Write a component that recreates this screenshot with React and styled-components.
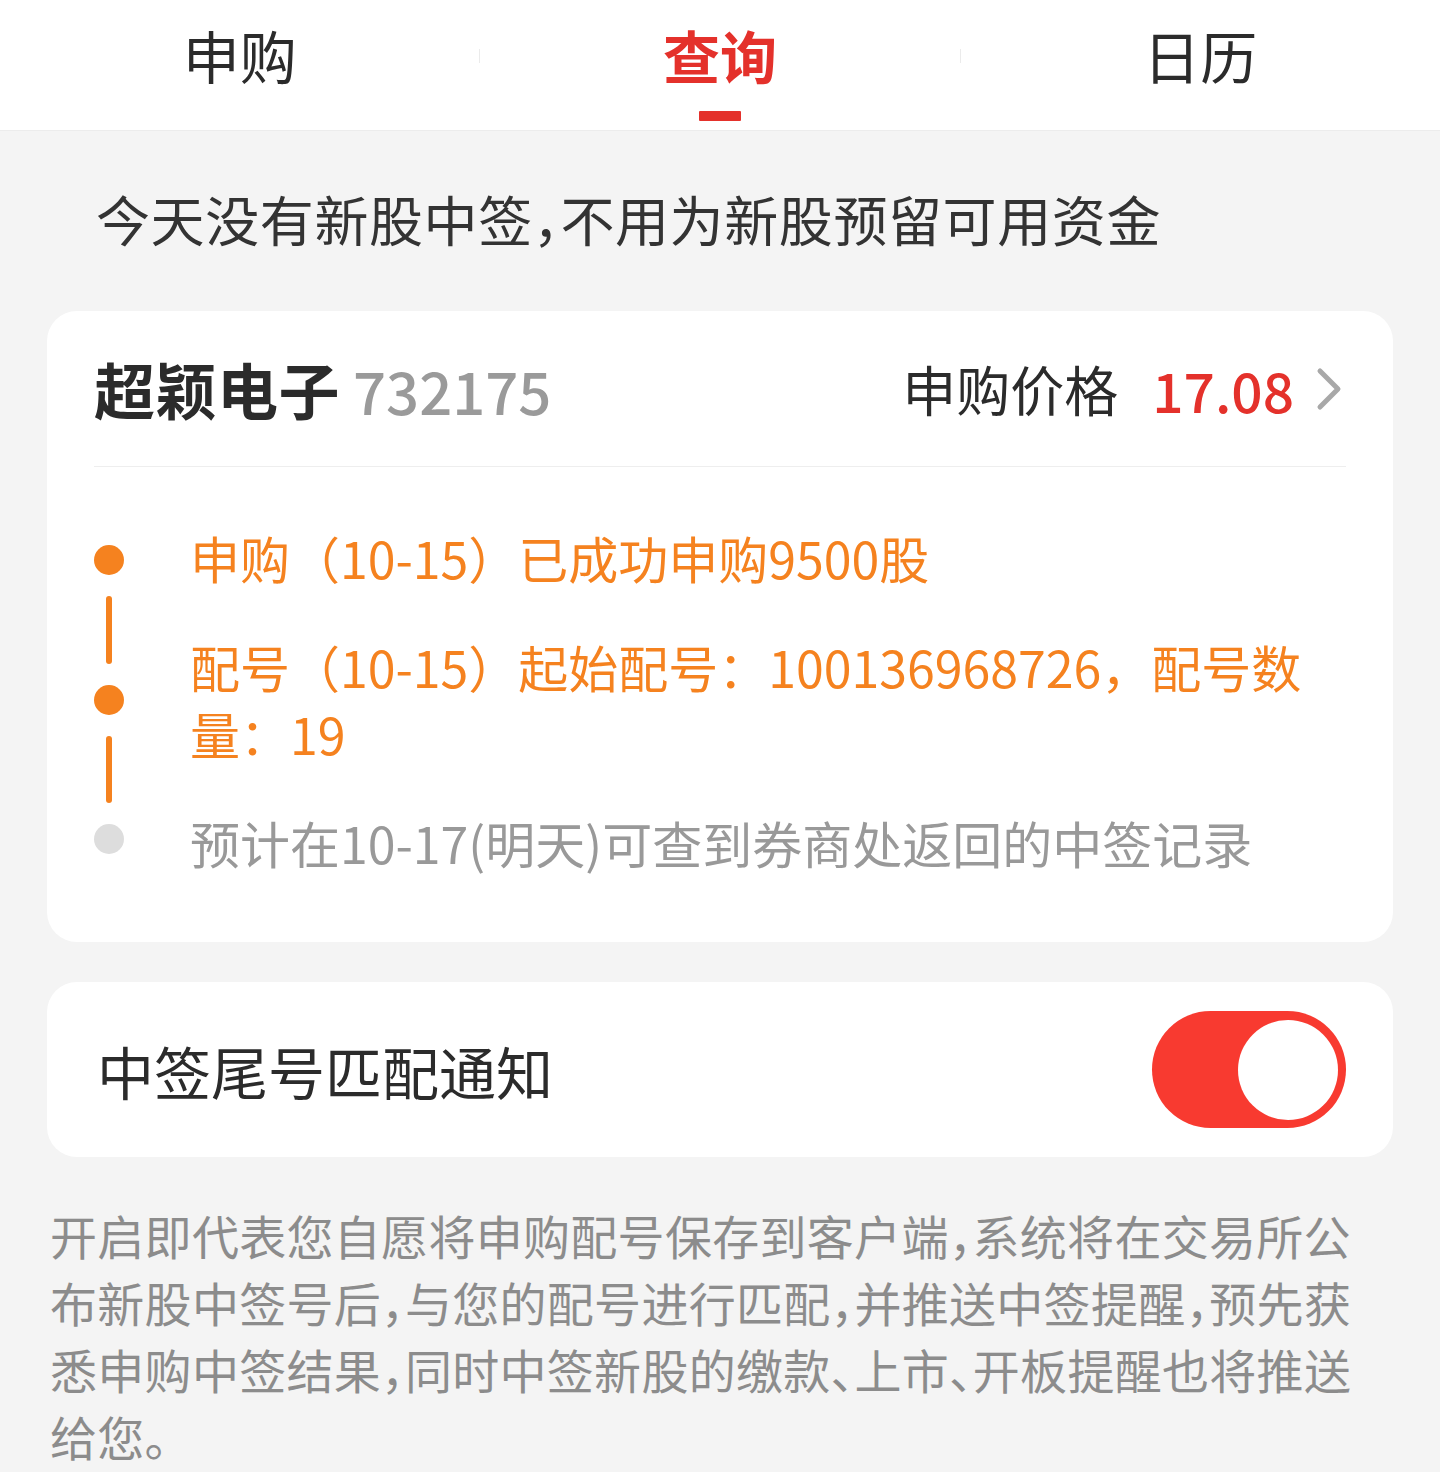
import React, { useState } from "react";
import styled, { createGlobalStyle } from "styled-components";

const GlobalStyle = createGlobalStyle`
  html, body {
    margin: 0;
    padding: 0;
    background: #f4f4f4;
  }
  body {
    font-family: "Noto Sans CJK SC", "Noto Sans", sans-serif;
    color: #333;
  }
  * {
    box-sizing: border-box;
  }
`;

const tabs = ["申购", "查询", "日历"];

const steps = [
  { text: "申购（10-15）已成功申购9500股", done: true },
  { text: "配号（10-15）起始配号：100136968726，配号数量：19", done: true },
  { text: "预计在10-17(明天)可查到券商处返回的中签记录", done: false },
];

const App = () => {
  const [active, setActive] = useState(1);
  const [notify, setNotify] = useState(true);
  return (
    <Page>
      <GlobalStyle />
      <TabBar>
        {tabs.map((t, i) => (
          <React.Fragment key={t}>
            {i > 0 ? <TabSep /> : null}
            <Tab onClick={() => setActive(i)}>
              <TabText active={i === active}>{t}</TabText>
              <TabLine active={i === active} />
            </Tab>
          </React.Fragment>
        ))}
      </TabBar>

      <Notice>今天没有新股中签，不用为新股预留可用资金</Notice>

      <Card>
        <Header>
          <NameWrap>
            <Name>超颖电子</Name>
            <Code>732175</Code>
          </NameWrap>
          <PriceWrap>
            <PriceLabel>申购价格</PriceLabel>
            <Price>17.08</Price>
            <Chevron width="26" height="44" viewBox="0 0 26 44">
              <polyline
                points="4,4 22,22 4,40"
                fill="none"
                stroke="#a8a8a8"
                strokeWidth="5"
                strokeLinecap="round"
                strokeLinejoin="round"
              />
            </Chevron>
          </PriceWrap>
        </Header>
        <Divider />
        <Timeline>
          <Rail>
            <Dot done />
            <RailLine h={68} />
            <Dot done />
            <RailLine h={67} />
            <Dot />
          </Rail>
          <Steps>
            {steps.map((s) => (
              <Step key={s.text} done={s.done}>
                {s.text}
              </Step>
            ))}
          </Steps>
        </Timeline>
      </Card>

      <SwitchCard>
        <SwitchLabel>中签尾号匹配通知</SwitchLabel>
        <Toggle on={notify} onClick={() => setNotify(!notify)}>
          <Knob />
        </Toggle>
      </SwitchCard>

      <Footer>
        开启即代表您自愿将申购配号保存到客户端，系统将在交易所公布新股中签号后，与您的配号进行匹配，并推送中签提醒，预先获悉申购中签结果，同时中签新股的缴款、上市、开板提醒也将推送给您。
      </Footer>
    </Page>
  );
};

export default App;

const Page = styled.div`
  width: 1440px;
  min-height: 1472px;
  background: #f4f4f4;
`;

const TabBar = styled.div`
  height: 131px;
  background: #fff;
  display: flex;
  align-items: flex-start;
  border-bottom: 1px solid #ececec;
`;

const TabSep = styled.div`
  flex: none;
  width: 1px;
  height: 14px;
  margin-top: 49px;
  background: #ebebeb;
`;

const Tab = styled.div`
  flex: 1;
  display: flex;
  flex-direction: column;
  align-items: center;
  padding-top: 19px;
  cursor: pointer;
`;

const TabText = styled.div`
  font-size: 57px;
  line-height: 70px;
  font-weight: ${(p) => (p.active ? 700 : 400)};
  color: ${(p) => (p.active ? "#e4312b" : "#2b2b2b")};
`;

const TabLine = styled.div`
  width: 42px;
  height: 10px;
  margin-top: 22px;
  border-radius: 1px;
  background: ${(p) => (p.active ? "#e4312b" : "transparent")};
`;

const Notice = styled.div`
  padding: 58px 0 62px 96px;
  font-size: 54px;
  line-height: 60px;
  letter-spacing: 0.6px;
  color: #333;
  font-feature-settings: "halt";
`;

const Card = styled.div`
  margin: 0 47px;
  padding: 0 47px 66px;
  background: #fff;
  border-radius: 30px;
`;

const Header = styled.div`
  height: 155px;
  display: flex;
  align-items: center;
  justify-content: space-between;
`;

const NameWrap = styled.div`
  display: flex;
  align-items: baseline;
`;

const Name = styled.span`
  font-size: 61px;
  font-weight: 700;
  color: #2b2b2b;
  letter-spacing: 0.5px;
`;

const Code = styled.span`
  margin-left: 13px;
  font-size: 58px;
  font-weight: 500;
  color: #9a9a9a;
`;

const PriceWrap = styled.div`
  display: flex;
  align-items: center;
`;

const PriceLabel = styled.span`
  font-size: 54px;
  color: #2b2b2b;
`;

const Price = styled.span`
  margin-left: 34px;
  font-size: 55px;
  font-weight: 500;
  color: #e4312b;
`;

const Chevron = styled.svg`
  display: block;
  margin-left: 22px;
  margin-right: 4px;
`;

const Divider = styled.div`
  height: 1px;
  background: #eeeeee;
`;

const Timeline = styled.div`
  display: grid;
  grid-template-columns: 30px 1fr;
  column-gap: 66px;
`;

const Rail = styled.div`
  display: flex;
  flex-direction: column;
  align-items: center;
  padding-top: 78px;
`;

const Dot = styled.div`
  width: 30px;
  height: 30px;
  border-radius: 50%;
  background: ${(p) => (p.done ? "#f5821f" : "#dddddd")};
`;

const RailLine = styled.div`
  width: 6px;
  height: ${(p) => p.h}px;
  margin: 21px 0;
  border-radius: 3px;
  background: #f5821f;
`;

const Steps = styled.div`
  display: flex;
  flex-direction: column;
  gap: 42px;
  padding-top: 57px;
`;

const Step = styled.div`
  font-size: 50px;
  line-height: 67px;
  color: ${(p) => (p.done ? "#f5821f" : "#999999")};
`;

const SwitchCard = styled.div`
  margin: 40px 47px 0;
  height: 175px;
  padding: 0 47px 0 50px;
  background: #fff;
  border-radius: 30px;
  display: flex;
  align-items: center;
  justify-content: space-between;
`;

const SwitchLabel = styled.div`
  font-size: 57px;
  color: #2b2b2b;
`;

const Toggle = styled.div`
  width: 194px;
  height: 117px;
  border-radius: 59px;
  padding: 0 8px;
  background: ${(p) => (p.on ? "#f83a30" : "#dddddd")};
  display: flex;
  align-items: center;
  justify-content: ${(p) => (p.on ? "flex-end" : "flex-start")};
  cursor: pointer;
`;

const Knob = styled.div`
  width: 100px;
  height: 100px;
  border-radius: 50%;
  background: #fff;
`;

const Footer = styled.div`
  padding: 44px 60px 0 50px;
  font-size: 47px;
  line-height: 67px;
  letter-spacing: 0.3px;
  color: #8c8c8c;
  font-feature-settings: "halt";
`;
